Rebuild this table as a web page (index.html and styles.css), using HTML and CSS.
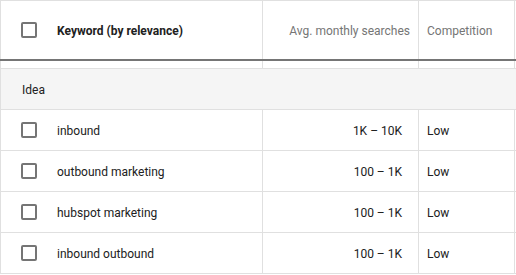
FILE: index.html
```html
<!DOCTYPE html>
<html>
<head>
<meta charset="utf-8">
<link rel="stylesheet" href="styles.css">
</head>
<body>
<div class="table">
  <div class="row head">
    <div class="cell c1"><span class="cb"></span><span class="txt kw-head">Keyword (by relevance)</span></div>
    <div class="cell c2"><span class="txt sub-head">Avg. monthly searches</span></div>
    <div class="cell c3"><span class="txt sub-head">Competition</span></div>
  </div>
  <div class="row spacer">
    <div class="cell c1"></div>
    <div class="cell c2"></div>
    <div class="cell c3"></div>
  </div>
  <div class="row group"><span class="txt">Idea</span></div>
  <div class="row item">
    <div class="cell c1"><span class="cb"></span><span class="txt">inbound</span></div>
    <div class="cell c2"><span class="txt">1K – 10K</span></div>
    <div class="cell c3"><span class="txt">Low</span></div>
  </div>
  <div class="row item">
    <div class="cell c1"><span class="cb"></span><span class="txt">outbound marketing</span></div>
    <div class="cell c2"><span class="txt">100 – 1K</span></div>
    <div class="cell c3"><span class="txt">Low</span></div>
  </div>
  <div class="row item">
    <div class="cell c1"><span class="cb"></span><span class="txt">hubspot marketing</span></div>
    <div class="cell c2"><span class="txt">100 – 1K</span></div>
    <div class="cell c3"><span class="txt">Low</span></div>
  </div>
  <div class="row item">
    <div class="cell c1"><span class="cb"></span><span class="txt">inbound outbound</span></div>
    <div class="cell c2"><span class="txt">100 – 1K</span></div>
    <div class="cell c3"><span class="txt">Low</span></div>
  </div>
</div>
</body>
</html>
```

FILE: styles.css
```css
html, body {
  margin: 0;
  padding: 0;
  background: #fff;
}
body {
  font-family: Roboto, "Liberation Sans", Arial, sans-serif;
  font-size: 12px;
  color: #212121;
}
.table {
  width: 516px;
}
.row {
  display: flex;
  border-bottom: 1px solid #e0e0e0;
}
.cell {
  box-sizing: border-box;
  display: flex;
  align-items: center;
  border-right: 1px solid #e0e0e0;
}
.c1 {
  width: 263px;
  border-left: 1px solid #e0e0e0;
  padding-left: 20px;
  gap: 20px;
}
.c2 {
  width: 156px;
  justify-content: flex-end;
  padding-right: 16px;
}
.c3 {
  width: 96px;
  padding-left: 8px;
}
.txt {
  padding-top: 2px;
}
.head {
  height: 61px;
  box-sizing: border-box;
  border-top: 1px solid #e0e0e0;
  border-bottom: 2px solid #757575;
}
.head .c2 {
  padding-right: 8px;
}
.kw-head {
  font-weight: 700;
  color: #212121;
}
.sub-head {
  color: #757575;
}
.spacer {
  height: 7px;
}
.group {
  height: 40px;
  background: #f5f5f5;
  align-items: center;
  padding-left: 21px;
  border-left: 1px solid #e0e0e0;
}
.item {
  height: 40px;
}
.cb {
  box-sizing: border-box;
  width: 16px;
  height: 16px;
  border: 2px solid #757575;
  border-radius: 2px;
  flex: none;
}
```
